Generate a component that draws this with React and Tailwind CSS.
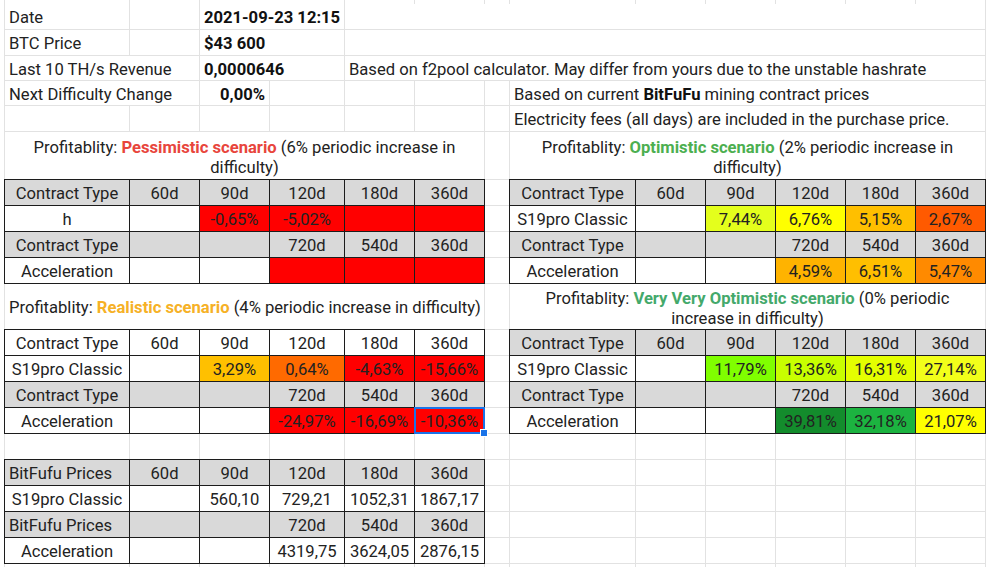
import React from "react";

const SPAN = {
  1: "col-span-1",
  2: "col-span-2",
  6: "col-span-6",
  9: "col-span-9",
};

const ALIGN = {
  left: "justify-start pl-[4px]",
  center: "justify-center",
  right: "justify-end pr-[4px]",
};

// n = plain sheet cell, t = cell inside a bordered table
const n = (span = 1, text = "", opts = {}) => ({ span, text, ...opts });
const t = (text = "", bg = "bg-white", opts = {}) => ({ span: 1, text, bg, boxed: true, align: "center", ...opts });
const blank = (count) => Array.from({ length: count }, () => n());

const RED = "bg-[#ff0000]";
const GRAY = "bg-[#d9d9d9]";

const header = () => [
  t("Contract Type", GRAY),
  t("60d", GRAY),
  t("90d", GRAY),
  t("120d", GRAY),
  t("180d", GRAY),
  t("360d", GRAY),
];
const subHeader = (label = "Contract Type", align = "center") => [
  t(label, GRAY, { align }),
  t("", GRAY),
  t("", GRAY),
  t("720d", GRAY),
  t("540d", GRAY),
  t("360d", GRAY),
];

const Title = ({ color, label, rest, br }) => (
  <span>
    Profitablity: <span className={`font-bold ${color}`}>{label}</span> {rest}
    {br && (
      <>
        <br />
        {br}
      </>
    )}
  </span>
);

const rows = [
  [n(), n(), n(2), ...blank(9)],
  [n(1, "Date", { align: "left" }), n(), n(2, "2021-09-23 12:15", { bold: true, align: "left" }), n(9)],
  [n(1, "BTC Price", { align: "left" }), n(), n(2, "$43 600", { bold: true, align: "left" }), n(9)],
  [
    n(2, "Last 10 TH/s Revenue", { align: "left" }),
    n(2, "0,0000646", { bold: true, align: "left" }),
    n(9, "Based on f2pool calculator. May differ from yours due to the unstable hashrate", { align: "left" }),
  ],
  [
    n(2, "Next Difficulty Change", { align: "left" }),
    n(1, "0,00%", { bold: true, align: "right" }),
    ...blank(4),
    n(
      6,
      <span>
        Based on current <b className="font-bold text-[#111]">BitFuFu</b> mining contract prices
      </span>,
      { align: "left" }
    ),
  ],
  [...blank(7), n(6, "Electricity fees (all days) are included in the purchase price.", { align: "left" })],
  [
    n(6, <Title color="text-[#e8453c]" label="Pessimistic scenario" rest="(6% periodic increase in" br="difficulty)" />, { align: "center", wrap: true }),
    n(),
    n(6, <Title color="text-[#4caf50]" label="Optimistic scenario" rest="(2% periodic increase in" br="difficulty)" />, { align: "center", wrap: true }),
  ],
  [...header(), n(), ...header()],
  [
    t("h"), t(), t("-0,65%", RED), t("-5,02%", RED), t("", RED), t("", RED),
    n(),
    t("S19pro Classic"), t(), t("7,44%", "bg-[#e4ff1c]"), t("6,76%", "bg-[#ffff00]"), t("5,15%", "bg-[#ffbf00]"), t("2,67%", "bg-[#ff5a00]"),
  ],
  [...subHeader(), n(), ...subHeader()],
  [
    t("Acceleration"), t(), t(), t("", RED), t("", RED), t("", RED),
    n(),
    t("Acceleration"), t(), t(), t("4,59%", "bg-[#ffb300]"), t("6,51%", "bg-[#ffbf00]"), t("5,47%", "bg-[#ff8a00]"),
  ],
  [
    n(6, <Title color="text-[#f6b126]" label="Realistic scenario" rest="(4% periodic increase in difficulty)" />, { align: "left" }),
    n(),
    n(6, <Title color="text-[#44a96b]" label="Very Very Optimistic scenario" rest="(0% periodic" br="increase in difficulty)" />, { align: "center", wrap: true }),
  ],
  [
    t("Contract Type"), t("60d"), t("90d"), t("120d"), t("180d"), t("360d"),
    n(),
    ...header(),
  ],
  [
    t("S19pro Classic"), t(), t("3,29%", "bg-[#ffc000]"), t("0,64%", "bg-[#ff6a00]"), t("-4,63%", RED), t("-15,66%", RED),
    n(),
    t("S19pro Classic"), t(), t("11,79%", "bg-[#80ff00]"), t("13,36%", "bg-[#c8ff00]"), t("16,31%", "bg-[#e4ff00]"), t("27,14%", "bg-[#f2ff1a]"),
  ],
  [...subHeader(), n(), ...subHeader()],
  [
    t("Acceleration"), t(), t(), t("-24,97%", RED), t("-16,69%", RED), t("-10,36%", RED, { selected: true }),
    n(),
    t("Acceleration"), t(), t(), t("39,81%", "bg-[#138c2c]"), t("32,18%", "bg-[#1cb340]"), t("21,07%", "bg-[#ffff00]"),
  ],
  blank(13),
  [
    t("BitFufu Prices", GRAY, { align: "left" }), t("60d", GRAY), t("90d", GRAY), t("120d", GRAY), t("180d", GRAY), t("360d", GRAY),
    ...blank(7),
  ],
  [t("S19pro Classic"), t(), t("560,10"), t("729,21"), t("1052,31"), t("1867,17"), ...blank(7)],
  [...subHeader("BitFufu Prices", "left"), ...blank(7)],
  [t("Acceleration"), t(), t(), t("4319,75"), t("3624,05"), t("2876,15"), ...blank(7)],
  blank(13),
];

function Cell({ cell }) {
  const { span, text, bg = "bg-white", boxed, align = "left", bold, wrap, selected } = cell;
  return (
    <div
      className={[
        "relative flex items-center overflow-visible",
        SPAN[span],
        bg,
        ALIGN[align],
        boxed ? "-mt-px -ml-px border border-[#1c1c1c]" : "border-r border-b border-[#e2e2e2]",
        bold ? "font-bold text-[#111]" : "",
        wrap ? "pt-[5px] text-center leading-[20px]" : "whitespace-nowrap pt-[4px]",
      ].join(" ")}
    >
      {text}
      {selected && (
        <>
          <div className="absolute -inset-px border-2 border-[#1a73e8]" />
          <div className="absolute -right-[4px] -bottom-[4px] z-10 h-[8px] w-[8px] border border-white bg-[#1a73e8]" />
        </>
      )}
    </div>
  );
}

export default function App() {
  return (
    <div className="h-[567px] w-[987px] overflow-hidden bg-white pl-1 font-['Roboto',sans-serif] text-[16.6px] text-[#222]">
      <div className="grid grid-cols-[125px_70px_70px_75px_70px_70px_25px_126px_70px_70px_70px_70px_70px] grid-rows-[4px_26px_26px_25px_25px_26px_48px_26px_26px_26px_26px_46px_26px_26px_26px_26px_26px_26px_26px_26px_26px_26px] border-l border-[#e2e2e2]">
        {rows.map((row, r) => row.map((cell, c) => <Cell key={`${r}-${c}`} cell={cell} />))}
      </div>
    </div>
  );
}
